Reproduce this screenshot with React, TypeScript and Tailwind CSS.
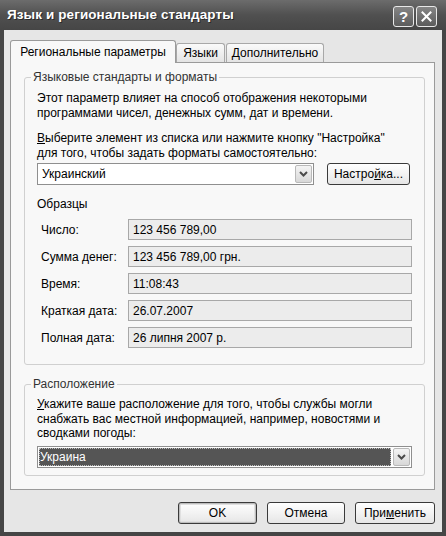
import React from "react";

const rows: [string, string][] = [
  ["Число:", "123 456 789,00"],
  ["Сумма денег:", "123 456 789,00 грн."],
  ["Время:", "11:08:43"],
  ["Краткая дата:", "26.07.2007"],
  ["Полная дата:", "26 липня 2007 р."],
];

function Chevron() {
  return (
    <svg width="9" height="6" viewBox="0 0 9 6">
      <path d="M1 1 L4.5 4.5 L8 1" fill="none" stroke="#4a4a4a" strokeWidth="2" />
    </svg>
  );
}

function DropButton() {
  return (
    <div className="w-[17px] h-full flex items-center justify-center rounded-[2px] border border-[#b9b9b9] bg-gradient-to-b from-[#f4f4f4] to-[#d8d8d8]">
      <Chevron />
    </div>
  );
}

function XPButton({ children, w, def }: { children: React.ReactNode; w: string; def?: boolean }) {
  return (
    <button
      className={
        "h-[22px] rounded-[3px] border border-[#3a3a3a] bg-gradient-to-b from-[#ffffff] to-[#e6e6e6] flex items-center justify-center text-black " +
        w +
        (def ? " shadow-[inset_0_0_0_1px_#bdbdbd,inset_0_0_0_2px_#e0e0e0]" : "")
      }
    >
      {children}
    </button>
  );
}

export default function App() {
  return (
    <div className="w-[446px] h-[536px] bg-[#454545] flex flex-col font-['Liberation_Sans',Arial,sans-serif] text-[12px] text-black">
      {/* заголовок окна */}
      <div className="h-[30px] bg-gradient-to-b from-[#6c6c6c] via-[#505050] to-[#464646] flex items-center pl-[7px] pr-[9px]">
        <span className="flex-1 text-white font-bold text-[13.5px] tracking-[0.1px] [text-shadow:1px_1px_0_#2a2a2a]">
          Язык и региональные стандарты
        </span>
        <div className="flex gap-[2px] pt-[3px]">
          <div className="w-[21px] h-[21px] rounded-[3px] border border-[#e8e8e8] bg-gradient-to-b from-[#858585] to-[#5c5c5c] flex items-center justify-center text-white font-bold text-[15px] leading-none">
            ?
          </div>
          <div className="w-[21px] h-[21px] rounded-[3px] border border-[#e8e8e8] bg-gradient-to-b from-[#858585] to-[#5c5c5c] flex items-center justify-center">
            <svg width="11" height="11" viewBox="0 0 11 11">
              <path d="M1.5 1.5 L9.5 9.5 M9.5 1.5 L1.5 9.5" stroke="#fff" strokeWidth="2" strokeLinecap="square" />
            </svg>
          </div>
        </div>
      </div>

      {/* тело окна */}
      <div className="flex-1 mx-[4px] mb-[4px] bg-[#e6e6e6] flex flex-col pt-[10px] pr-[7px]">
        {/* вкладки */}
        <div className="ml-[6px] h-[22px] flex items-end">
          <div className="relative z-10 w-[166px] h-[23px] -mb-[1px] bg-[#f8f8f8] border border-b-0 border-[#9a9a9a] rounded-t-[3px] flex items-center justify-center pb-[1px]">
            Региональные параметры
          </div>
          <div className="w-[49px] h-[19px] bg-gradient-to-b from-[#fafafa] to-[#e4e4e4] border border-b-0 border-[#a8a8a8] rounded-t-[3px] flex items-center justify-center">
            Языки
          </div>
          <div className="ml-[1px] w-[98px] h-[19px] bg-gradient-to-b from-[#fafafa] to-[#e4e4e4] border border-b-0 border-[#a8a8a8] rounded-t-[3px] flex items-center justify-center">
            Дополнительно
          </div>
        </div>

        {/* панель */}
        <div className="ml-[6px] w-[425px] h-[428px] bg-[#f8f8f8] border border-[#9a9a9a] pt-[7px]">
          <fieldset className="ml-[13px] w-[401px] border border-[#d0d0d0] rounded-[3px] px-0">
            <legend className="ml-[6px] px-[2px] leading-[15px] text-[#333]">Языковые стандарты и форматы</legend>
            <div className="px-[12px] pt-[6px] pb-[16px]">
              <p className="leading-[15px]">
                Этот параметр влияет на способ отображения некоторыми
                <br />
                программами чисел, денежных сумм, дат и времени.
              </p>
              <p className="leading-[15px] mt-[10px]">
                <span className="underline">В</span>ыберите элемент из списка или нажмите кнопку "Настройка"
                <br />
                для того, чтобы задать форматы самостоятельно:
              </p>
              <div className="mt-[2px] flex items-center">
                <div className="w-[277px] h-[22px] border border-[#8f8f8f] bg-white flex items-center p-[1px]">
                  <span className="flex-1 pl-[3px]">Украинский</span>
                  <DropButton />
                </div>
                <div className="ml-[13px]">
                  <XPButton w="w-[83px]">
                    <span>
                      Настро<span className="underline">й</span>ка...
                    </span>
                  </XPButton>
                </div>
              </div>
              <div className="mt-[12px] leading-[15px]">Образцы</div>
              <div className="mt-[7px] flex flex-col gap-[6px]">
                {rows.map(([label, value]) => (
                  <div key={label} className="flex items-center pl-[4px]">
                    <span className="w-[87px]">{label}</span>
                    <div className="w-[284px] h-[21px] border border-[#a8a8a8] bg-[#ececec] flex items-center pl-[4px]">
                      {value}
                    </div>
                  </div>
                ))}
              </div>
            </div>
          </fieldset>

          <fieldset className="mt-[12px] ml-[13px] w-[401px] border border-[#d0d0d0] rounded-[3px] px-0">
            <legend className="ml-[6px] px-[2px] leading-[15px] text-[#333]">Расположение</legend>
            <div className="px-[12px] pt-[5px] pb-[7px]">
              <p className="leading-[14.5px]">
                <span className="underline">У</span>кажите ваше расположение для того, чтобы службы могли
                <br />
                снабжать вас местной информацией, например, новостями и
                <br />
                сводками погоды:
              </p>
              <div className="mt-[5px] w-[375px] h-[22px] border border-[#8f8f8f] bg-white flex items-center p-[1px]">
                <div className="flex-1 h-full bg-[#555555] text-white flex items-center pl-[1px] outline-1 outline-dotted outline-[#bbbbbb] -outline-offset-1 mr-[2px]">
                  Украина
                </div>
                <DropButton />
              </div>
            </div>
          </fieldset>
        </div>

        {/* кнопки */}
        <div className="mt-[12px] flex justify-end gap-[10px]">
          <XPButton w="w-[79px]" def>
            OK
          </XPButton>
          <XPButton w="w-[78px]">Отмена</XPButton>
          <XPButton w="w-[80px]">
            <span>
              При<span className="underline">м</span>енить
            </span>
          </XPButton>
        </div>
      </div>
    </div>
  );
}
